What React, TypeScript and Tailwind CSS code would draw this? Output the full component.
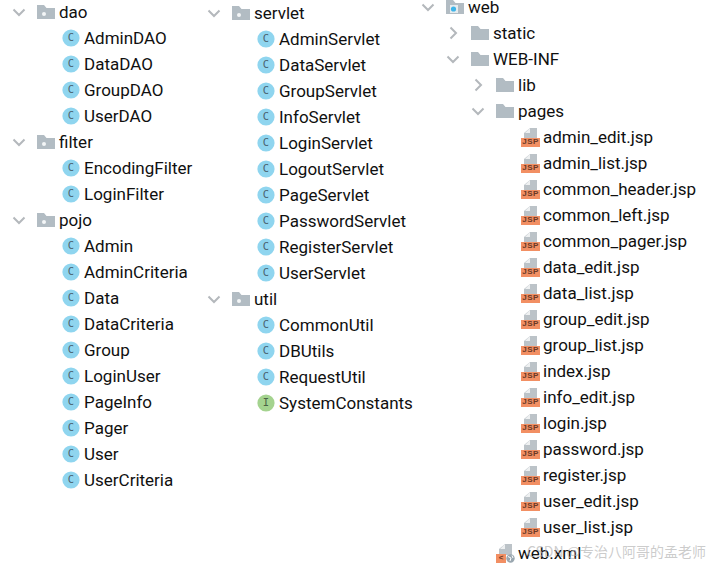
import type { ReactNode } from "react";

type Kind = "package" | "module" | "folder" | "class" | "iface" | "jsp" | "xml";
type Node = { name: string; level: number; kind: Kind; open?: boolean };

const pkg = (name: string): Node => ({ name, level: 0, kind: "package", open: true });
const cls = (name: string): Node => ({ name, level: 1, kind: "class" });
const jsp = (name: string): Node => ({ name, level: 3, kind: "jsp" });

const col1: Node[] = [
  pkg("dao"),
  ...["AdminDAO", "DataDAO", "GroupDAO", "UserDAO"].map(cls),
  pkg("filter"),
  ...["EncodingFilter", "LoginFilter"].map(cls),
  pkg("pojo"),
  ...["Admin", "AdminCriteria", "Data", "DataCriteria", "Group", "LoginUser", "PageInfo", "Pager", "User", "UserCriteria"].map(cls),
];

const col2: Node[] = [
  pkg("servlet"),
  ...["AdminServlet", "DataServlet", "GroupServlet", "InfoServlet", "LoginServlet", "LogoutServlet", "PageServlet", "PasswordServlet", "RegisterServlet", "UserServlet"].map(cls),
  pkg("util"),
  ...["CommonUtil", "DBUtils", "RequestUtil"].map(cls),
  { name: "SystemConstants", level: 1, kind: "iface" },
];

const col3: Node[] = [
  { name: "web", level: 0, kind: "module", open: true },
  { name: "static", level: 1, kind: "folder", open: false },
  { name: "WEB-INF", level: 1, kind: "folder", open: true },
  { name: "lib", level: 2, kind: "folder", open: false },
  { name: "pages", level: 2, kind: "folder", open: true },
  ...["admin_edit.jsp", "admin_list.jsp", "common_header.jsp", "common_left.jsp", "common_pager.jsp", "data_edit.jsp", "data_list.jsp", "group_edit.jsp", "group_list.jsp", "index.jsp", "info_edit.jsp", "login.jsp", "password.jsp", "register.jsp", "user_edit.jsp", "user_list.jsp"].map(jsp),
  { name: "web.xml", level: 2, kind: "xml" },
];

function Chevron({ open }: { open: boolean }) {
  return (
    <svg width="14" height="14" viewBox="0 0 14 14" fill="none" stroke="#b4b8bc" strokeWidth="2">
      {open ? <path d="M1.5 4.5 7 10l5.5-5.5" /> : <path d="M4.5 1.5 10 7l-5.5 5.5" />}
    </svg>
  );
}

function FolderIcon({ dot }: { dot?: "white" | "blue" }) {
  return (
    <svg width="18" height="16" viewBox="0 0 18 16">
      <path d="M0 1h7l2.5 3H18v11H0z" fill="#b2bcc3" />
      {dot === "white" && <circle cx="7" cy="10" r="2" fill="#f4f6f7" />}
      {dot === "blue" && (
        <>
          <rect x="4" y="6" width="8" height="8" fill="#e6ebee" />
          <circle cx="7.5" cy="10" r="2.6" fill="#3fb4e8" />
        </>
      )}
    </svg>
  );
}

function ClassIcon({ letter, bg, fg }: { letter: string; bg: string; fg: string }) {
  return (
    <svg width="18" height="18" viewBox="0 0 18 18">
      <circle cx="9" cy="9" r="8.6" fill={bg} />
      <text x="9" y="12.4" textAnchor="middle" fontSize="10.5" fontFamily="'DejaVu Sans Mono', monospace" fill={fg}>
        {letter}
      </text>
    </svg>
  );
}

function FileBadge({ children }: { children: ReactNode }) {
  return (
    <div className="relative h-[19px] w-[19px]">
      <svg className="absolute left-[3px] top-0" width="13" height="11" viewBox="0 0 13 11">
        <path d="M0 11V5l6-5h7v11z" fill="#bcc3c8" />
        <path d="M1 5h5V0z" fill="#eef0f1" />
      </svg>
      {children}
    </div>
  );
}

function NodeIcon({ kind }: { kind: Kind }) {
  switch (kind) {
    case "package":
      return <FolderIcon dot="white" />;
    case "module":
      return <FolderIcon dot="blue" />;
    case "folder":
      return <FolderIcon />;
    case "class":
      return <ClassIcon letter="C" bg="#8fd5ef" fg="#4a626e" />;
    case "iface":
      return <ClassIcon letter="I" bg="#a4d38f" fg="#4a6245" />;
    case "jsp":
      return (
        <FileBadge>
          <div className="absolute bottom-0 left-0 flex h-[9px] w-[19px] items-center justify-center bg-[#f28f63] font-['Liberation_Sans',sans-serif] text-[8px] leading-none font-bold tracking-[0.5px] text-[#6b3a26]">
            JSP
          </div>
        </FileBadge>
      );
    case "xml":
      return (
        <FileBadge>
          <div className="absolute bottom-0 left-0 flex h-[9px] w-[10px] items-center justify-center bg-[#f28f63] font-['Liberation_Sans',sans-serif] text-[8px] leading-none font-bold text-[#6b3a26]">
            &lt;
          </div>
          <svg className="absolute bottom-0 left-[10px]" width="9" height="9" viewBox="0 0 9 9">
            <circle cx="4.5" cy="4.5" r="4.2" fill="#9aa7b0" />
            <path d="M2 2.5 5 4 4 7M6 1.5 7 4" stroke="#fff" strokeWidth="1" fill="none" />
          </svg>
        </FileBadge>
      );
  }
}

function Row({ node }: { node: Node }) {
  return (
    <div className="flex h-[26px] items-center" style={{ paddingLeft: node.level * 25 }}>
      <span className="flex w-[25px] shrink-0 items-center">
        {node.open !== undefined && <Chevron open={node.open} />}
      </span>
      <span className="flex w-[22px] shrink-0 items-center">
        <NodeIcon kind={node.kind} />
      </span>
      <span className="pt-[2px] whitespace-nowrap">{node.name}</span>
    </div>
  );
}

function Tree({ nodes, className }: { nodes: Node[]; className: string }) {
  return (
    <div className={className}>
      {nodes.map((n) => (
        <Row key={n.name} node={n} />
      ))}
    </div>
  );
}

export default function App() {
  return (
    <div className="relative flex h-[566px] w-[716px] items-start overflow-hidden bg-white pl-[12px] font-['Roboto',sans-serif] text-[17px] text-[#101010]">
      <Tree nodes={col1} className="-mt-[1px] w-[195px] shrink-0" />
      <Tree nodes={col2} className="w-[214px] shrink-0" />
      <Tree nodes={col3} className="-mt-[6px] shrink-0" />
      <div className="absolute right-[10px] bottom-[4px] font-['Noto_Sans_CJK_SC',sans-serif] text-[14px] whitespace-nowrap text-[#b5b5b5]/70">
        CSDN @专治八阿哥的孟老师
      </div>
    </div>
  );
}
